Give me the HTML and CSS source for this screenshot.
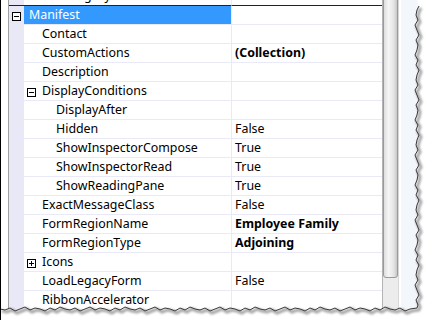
FILE: index.html
```html
<!DOCTYPE html>
<html lang="en">
<head>
  <meta charset="UTF-8">
  <title>Form Region Properties</title>
  <link rel="stylesheet" href="styles.css">
</head>
<body>

<div class="shot">
  <div class="grid">
    <div class="rows">
      <div class="row clipped"><span class="gutter"></span><span class="name">LoadLegacyForm</span><span class="value">False</span></div>

      <div class="row selected">
        <span class="gutter">
          <svg class="toggle" width="9" height="9"><rect x="0.5" y="0.5" width="8" height="8" fill="#fff" stroke="#000"/><path d="M2 4.5h5" stroke="#000"/></svg>
        </span>
        <span class="name lv0">Manifest</span><span class="value"></span>
      </div>
      <div class="row"><span class="gutter"></span><span class="name lv1">Contact</span><span class="value"></span></div>
      <div class="row"><span class="gutter"></span><span class="name lv1">CustomActions</span><span class="value bold">(Collection)</span></div>
      <div class="row"><span class="gutter"></span><span class="name lv1">Description</span><span class="value"></span></div>
      <div class="row">
        <span class="gutter"></span>
        <span class="name has-toggle">
          <svg class="toggle" width="9" height="9"><rect x="0.5" y="0.5" width="8" height="8" fill="#fff" stroke="#000"/><path d="M2 4.5h5" stroke="#000"/></svg>DisplayConditions
        </span>
        <span class="value"></span>
      </div>
      <div class="row"><span class="gutter"></span><span class="name lv2">DisplayAfter</span><span class="value"></span></div>
      <div class="row"><span class="gutter"></span><span class="name lv2">Hidden</span><span class="value">False</span></div>
      <div class="row"><span class="gutter"></span><span class="name lv2">ShowInspectorCompose</span><span class="value">True</span></div>
      <div class="row"><span class="gutter"></span><span class="name lv2">ShowInspectorRead</span><span class="value">True</span></div>
      <div class="row"><span class="gutter"></span><span class="name lv2">ShowReadingPane</span><span class="value">True</span></div>
      <div class="row"><span class="gutter"></span><span class="name lv1">ExactMessageClass</span><span class="value">False</span></div>
      <div class="row"><span class="gutter"></span><span class="name lv1">FormRegionName</span><span class="value bold">Employee Family</span></div>
      <div class="row"><span class="gutter"></span><span class="name lv1">FormRegionType</span><span class="value bold">Adjoining</span></div>
      <div class="row">
        <span class="gutter"></span>
        <span class="name has-toggle">
          <svg class="toggle" width="9" height="9"><rect x="0.5" y="0.5" width="8" height="8" fill="#fff" stroke="#000"/><path d="M2 4.5h5M4.5 2v5" stroke="#000"/></svg>Icons
        </span>
        <span class="value"></span>
      </div>
      <div class="row"><span class="gutter"></span><span class="name lv1">LoadLegacyForm</span><span class="value">False</span></div>
      <div class="row"><span class="gutter"></span><span class="name lv1">RibbonAccelerator</span><span class="value"></span></div>
    </div>

    <div class="scrollbar">
      <div class="thumb"></div>
    </div>
  </div>

  <div class="side"></div>

  <!-- torn edge of the screenshot, drawn over the right and bottom -->
  <svg class="torn" width="429" height="320" viewBox="0 0 429 320">
    <defs>
      <filter id="soft"><feGaussianBlur stdDeviation="1.2"/></filter>
    </defs>
    <path fill="#fff" d="M0 309 L5 310 L10 308 L15 311 L20 309 L25 307 L30 310 L35 308 L40 309 L45 311 L50 308 L55 310 L60 307 L65 309 L70 310 L75 308 L80 311 L85 309 L90 307 L95 310 L100 308 L105 309 L110 311 L115 308 L120 310 L125 307 L130 309 L135 310 L140 308 L145 311 L150 309 L155 307 L160 310 L165 308 L170 309 L175 311 L180 308 L185 310 L190 307 L195 309 L200 310 L205 308 L210 311 L215 309 L220 307 L225 310 L230 308 L235 309 L240 311 L245 308 L250 310 L255 307 L260 309 L265 310 L270 308 L275 311 L280 309 L285 307 L290 310 L295 308 L300 309 L305 311 L310 308 L315 310 L320 307 L325 309 L330 310 L335 308 L340 311 L345 309 L350 307 L355 310 L360 308 L365 309 L370 311 L375 308 L380 310 L385 307 L390 309 L395 310 L400 308 L405 311 L410 309 L417 308 L418 305 L416 300 L419 295 L417 290 L415 285 L418 280 L416 275 L417 270 L419 265 L416 260 L418 255 L415 250 L417 245 L418 240 L416 235 L419 230 L417 225 L415 220 L418 215 L416 210 L417 205 L419 200 L416 195 L418 190 L415 185 L417 180 L418 175 L416 170 L419 165 L417 160 L415 155 L418 150 L416 145 L417 140 L419 135 L416 130 L418 125 L415 120 L417 115 L418 110 L416 105 L419 100 L417 95 L415 90 L418 85 L416 80 L417 75 L419 70 L416 65 L418 60 L415 55 L417 50 L418 45 L416 40 L419 35 L417 30 L415 25 L418 20 L416 15 L417 10 L419 6 L417 0 L429 0 L429 320 L0 320 Z"/>
    <path class="edge-shadow" filter="url(#soft)" transform="translate(2 2)" d="M0 309 L5 310 L10 308 L15 311 L20 309 L25 307 L30 310 L35 308 L40 309 L45 311 L50 308 L55 310 L60 307 L65 309 L70 310 L75 308 L80 311 L85 309 L90 307 L95 310 L100 308 L105 309 L110 311 L115 308 L120 310 L125 307 L130 309 L135 310 L140 308 L145 311 L150 309 L155 307 L160 310 L165 308 L170 309 L175 311 L180 308 L185 310 L190 307 L195 309 L200 310 L205 308 L210 311 L215 309 L220 307 L225 310 L230 308 L235 309 L240 311 L245 308 L250 310 L255 307 L260 309 L265 310 L270 308 L275 311 L280 309 L285 307 L290 310 L295 308 L300 309 L305 311 L310 308 L315 310 L320 307 L325 309 L330 310 L335 308 L340 311 L345 309 L350 307 L355 310 L360 308 L365 309 L370 311 L375 308 L380 310 L385 307 L390 309 L395 310 L400 308 L405 311 L410 309 L417 308 L418 305 L416 300 L419 295 L417 290 L415 285 L418 280 L416 275 L417 270 L419 265 L416 260 L418 255 L415 250 L417 245 L418 240 L416 235 L419 230 L417 225 L415 220 L418 215 L416 210 L417 205 L419 200 L416 195 L418 190 L415 185 L417 180 L418 175 L416 170 L419 165 L417 160 L415 155 L418 150 L416 145 L417 140 L419 135 L416 130 L418 125 L415 120 L417 115 L418 110 L416 105 L419 100 L417 95 L415 90 L418 85 L416 80 L417 75 L419 70 L416 65 L418 60 L415 55 L417 50 L418 45 L416 40 L419 35 L417 30 L415 25 L418 20 L416 15 L417 10 L419 6"/>
    <path class="edge" d="M0 309 L5 310 L10 308 L15 311 L20 309 L25 307 L30 310 L35 308 L40 309 L45 311 L50 308 L55 310 L60 307 L65 309 L70 310 L75 308 L80 311 L85 309 L90 307 L95 310 L100 308 L105 309 L110 311 L115 308 L120 310 L125 307 L130 309 L135 310 L140 308 L145 311 L150 309 L155 307 L160 310 L165 308 L170 309 L175 311 L180 308 L185 310 L190 307 L195 309 L200 310 L205 308 L210 311 L215 309 L220 307 L225 310 L230 308 L235 309 L240 311 L245 308 L250 310 L255 307 L260 309 L265 310 L270 308 L275 311 L280 309 L285 307 L290 310 L295 308 L300 309 L305 311 L310 308 L315 310 L320 307 L325 309 L330 310 L335 308 L340 311 L345 309 L350 307 L355 310 L360 308 L365 309 L370 311 L375 308 L380 310 L385 307 L390 309 L395 310 L400 308 L405 311 L410 309 L417 308 L418 305 L416 300 L419 295 L417 290 L415 285 L418 280 L416 275 L417 270 L419 265 L416 260 L418 255 L415 250 L417 245 L418 240 L416 235 L419 230 L417 225 L415 220 L418 215 L416 210 L417 205 L419 200 L416 195 L418 190 L415 185 L417 180 L418 175 L416 170 L419 165 L417 160 L415 155 L418 150 L416 145 L417 140 L419 135 L416 130 L418 125 L415 120 L417 115 L418 110 L416 105 L419 100 L417 95 L415 90 L418 85 L416 80 L417 75 L419 70 L416 65 L418 60 L415 55 L417 50 L418 45 L416 40 L419 35 L417 30 L415 25 L418 20 L416 15 L417 10 L419 6"/>
  </svg>
</div>

</body>
</html>
```

FILE: styles.css
```css
body {
  margin: 0;
  padding: 0;
  background: #fff;
  font-family: 'Noto Sans', 'Liberation Sans', sans-serif;
  font-size: 12.4px;
  color: #000;
}

.shot {
  position: relative;
  width: 429px;
  height: 320px;
  overflow: hidden;
  display: flex;
  box-sizing: border-box;
  border-left: 1px solid #000;
  padding-left: 7px;
}

.grid {
  display: flex;
  border-left: 1px solid #a0a0a0;
}

.rows {
  width: 373px;
}

.row {
  display: flex;
  height: 19px;
}

.row.clipped {
  margin-top: -13px;
}

.gutter {
  width: 15px;
  flex: none;
  background: #e8e8f6;
}

.name,
.value {
  height: 18px;
  line-height: 18px;
  border-bottom: 1px solid #e9e9f7;
  white-space: nowrap;
  overflow: hidden;
}

.name {
  flex: none;
  box-sizing: border-box;
  width: 208px;
  height: 19px;
  border-right: 1px solid #e9e9f7;
  padding-left: 18px;
}

.value {
  flex: 1;
  padding-left: 3px;
}

.clipped .name,
.clipped .value {
  border-bottom-color: #222;
}

.clipped .gutter {
  border-bottom: 1px solid #222;
  height: 18px;
}

.name.lv0 { padding-left: 5px; }
.name.lv1 { padding-left: 18px; }
.name.lv2 { padding-left: 32px; }

.name.has-toggle {
  display: flex;
  padding-left: 3px;
}

.toggle {
  display: block;
  flex: none;
  margin-top: 6px;
  margin-right: 6px;
}

.gutter .toggle {
  margin-left: 3px;
}

.selected .name {
  background: #3399ff;
  color: #fff;
}

.bold {
  font-weight: bold;
}

.scrollbar {
  width: 15px;
  flex: none;
  background: #ececec;
  border-left: 1px solid #b4b4b4;
  border-right: 1px solid #d8d8d8;
}

.thumb {
  height: 288px;
  margin-top: -10px;
  box-sizing: border-box;
  border: 1px solid #9a9a9a;
  border-radius: 0 0 3px 3px;
  background: linear-gradient(to right, #dedede, #f6f6f6 35%, #e4e4e4 75%, #c8c8c8);
}

.side {
  flex: 1;
  background: #f3f6fb;
  border-left: 2px solid #fff;
}

.torn {
  position: absolute;
  left: -1px;
  top: 0;
}

.edge {
  fill: none;
  stroke: #3a3a3a;
  stroke-width: 1;
}

.edge-shadow {
  fill: none;
  stroke: rgba(0, 0, 0, 0.35);
  stroke-width: 3;
}
```
